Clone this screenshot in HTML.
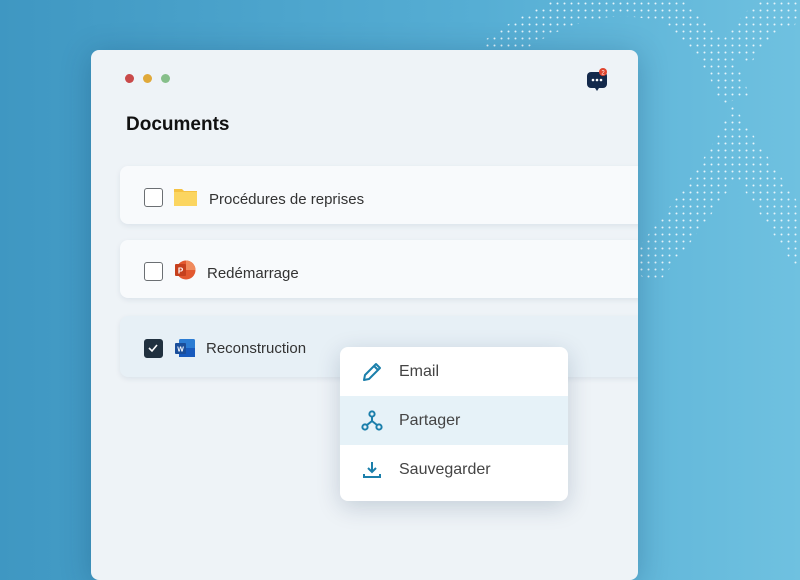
<!DOCTYPE html>
<html><head><meta charset="utf-8"><style>
*{margin:0;padding:0;box-sizing:border-box}
body{width:800px;height:561px;overflow:hidden;position:relative;font-family:"Liberation Sans",sans-serif;background:linear-gradient(90deg,#3f97c2 0%,#56aed4 60%,#6fc1e0 100%)}
.card{position:absolute;left:91px;top:50px;width:547px;height:530px;background:#eef3f7;border-radius:8px;box-shadow:0 4px 30px rgba(0,40,80,.25);overflow:hidden}
.dot{position:absolute;width:9px;height:9px;border-radius:50%}
.row{position:absolute;left:29px;width:540px;height:58px;background:#f8fafc;border-radius:8px;box-shadow:0 2px 6px rgba(0,40,80,.08)}
.cb{position:absolute;left:24px;top:22px;width:19px;height:19px;border:1.5px solid #6b6f73;border-radius:3px;background:#fff}
.t{position:absolute;top:5px;line-height:58px;font-size:15px;color:#333}
.menu{position:absolute;left:340px;top:347px;width:228px;height:154px;background:#fff;border-radius:8px;box-shadow:0 6px 24px rgba(0,40,80,.18);overflow:hidden}
.mi{height:49px;position:relative;font-size:16px;color:#444;line-height:49px;padding-left:59px}
.mi svg{position:absolute;left:21px;top:14px}
</style></head><body>
<svg style="position:absolute;left:470px;top:0" width="330" height="280">
<defs><pattern id="p" width="7" height="7" patternUnits="userSpaceOnUse"><circle cx="3.5" cy="3.5" r="1" fill="#e4f4fb"/></pattern>
<mask id="m"><path d="M20 55 Q120 -20 200 10 Q245 40 265 100" stroke="#fff" stroke-width="30" fill="none"/><path d="M265 55 Q300 0 330 10" stroke="#fff" stroke-width="36" fill="none"/><path d="M170 275 Q240 190 265 142 Q300 195 340 255" stroke="#fff" stroke-width="38" fill="none"/></mask></defs>
<rect width="330" height="280" fill="url(#p)" mask="url(#m)"/></svg>
<div class="card">
<div class="dot" style="left:34px;top:24px;background:#c94a4a"></div>
<div class="dot" style="left:52px;top:24px;background:#e0a93a"></div>
<div class="dot" style="left:70px;top:24px;background:#86bf8a"></div>
<svg style="position:absolute;left:495px;top:18px" width="26" height="26"><rect x="1" y="4" width="20" height="16" rx="4" fill="#13294b"/><path d="M9 20l2 3 2-3z" fill="#13294b"/><circle cx="7" cy="12" r="1.3" fill="#fff"/><circle cx="11" cy="12" r="1.3" fill="#fff"/><circle cx="15" cy="12" r="1.3" fill="#fff"/><circle cx="17" cy="4" r="4" fill="#e0452e"/><text x="17" y="6.5" font-size="6" fill="#fff" text-anchor="middle" font-family="Liberation Sans">2</text></svg>
<div style="position:absolute;left:35px;top:64px;font-size:19px;font-weight:bold;color:#111">Documents</div>
<div class="row" style="top:116px"><div class="cb"></div>
<svg style="position:absolute;left:53px;top:20px" width="25" height="22"><path d="M1 3h8l2 2h13v15H1z" fill="#f5c242"/><rect x="1" y="6" width="23" height="14" fill="#fbd560"/></svg>
<div class="t" style="left:89px">Procédures de reprises</div></div>
<div class="row" style="top:190px"><div class="cb"></div>
<svg style="position:absolute;left:54px;top:20px" width="22" height="20"><circle cx="12" cy="10" r="9.5" fill="#e2582f"/><path d="M12 .5A9.5 9.5 0 0 1 21.5 10H12z" fill="#f08a5c"/><rect x="1" y="4" width="11" height="12" rx="1" fill="#c6401d"/><text x="6.5" y="13.5" font-size="8" font-weight="bold" fill="#fff" text-anchor="middle">P</text></svg>
<div class="t" style="left:87px">Redémarrage</div></div>
<div class="row" style="top:266px;height:61px;background:#e7f0f6"><div class="cb" style="top:23px;background:#21313f;border-color:#21313f"><svg width="16" height="16"><path d="M4 8l3 3 5-6" stroke="#fff" stroke-width="1.6" fill="none"/></svg></div>
<svg style="position:absolute;left:54px;top:22px" width="22" height="20"><rect x="5" y="1" width="16" height="18" rx="1.5" fill="#2b7cd3"/><rect x="5" y="10" width="16" height="9" fill="#185abd"/><rect x="1" y="5" width="11" height="11" rx="1" fill="#1a4e9a"/><text x="6.5" y="13.5" font-size="7" font-weight="bold" fill="#fff" text-anchor="middle">W</text></svg>
<div class="t" style="left:86px;top:4px;line-height:58px">Reconstruction</div></div>
</div>
<div class="menu">
<div class="mi"><svg width="22" height="22"><path d="M3 19l1-5L15 3l4 4L8 18z M13 5l4 4" stroke="#1b7fab" stroke-width="2" fill="none" stroke-linejoin="round"/></svg>Email</div>
<div class="mi" style="background:#e6f2f8"><svg width="22" height="22"><circle cx="11" cy="4" r="2.6" stroke="#1b7fab" stroke-width="2" fill="none"/><circle cx="4" cy="17" r="2.6" stroke="#1b7fab" stroke-width="2" fill="none"/><circle cx="18" cy="17" r="2.6" stroke="#1b7fab" stroke-width="2" fill="none"/><path d="M11 7v4L6 15M11 11l5 4" stroke="#1b7fab" stroke-width="2" fill="none"/></svg>Partager</div>
<div class="mi"><svg width="22" height="22"><path d="M11 3v10M7 9l4 4 4-4M3 15v3h16v-3" stroke="#1b7fab" stroke-width="2" fill="none"/></svg>Sauvegarder</div>
</div>
</body></html>
